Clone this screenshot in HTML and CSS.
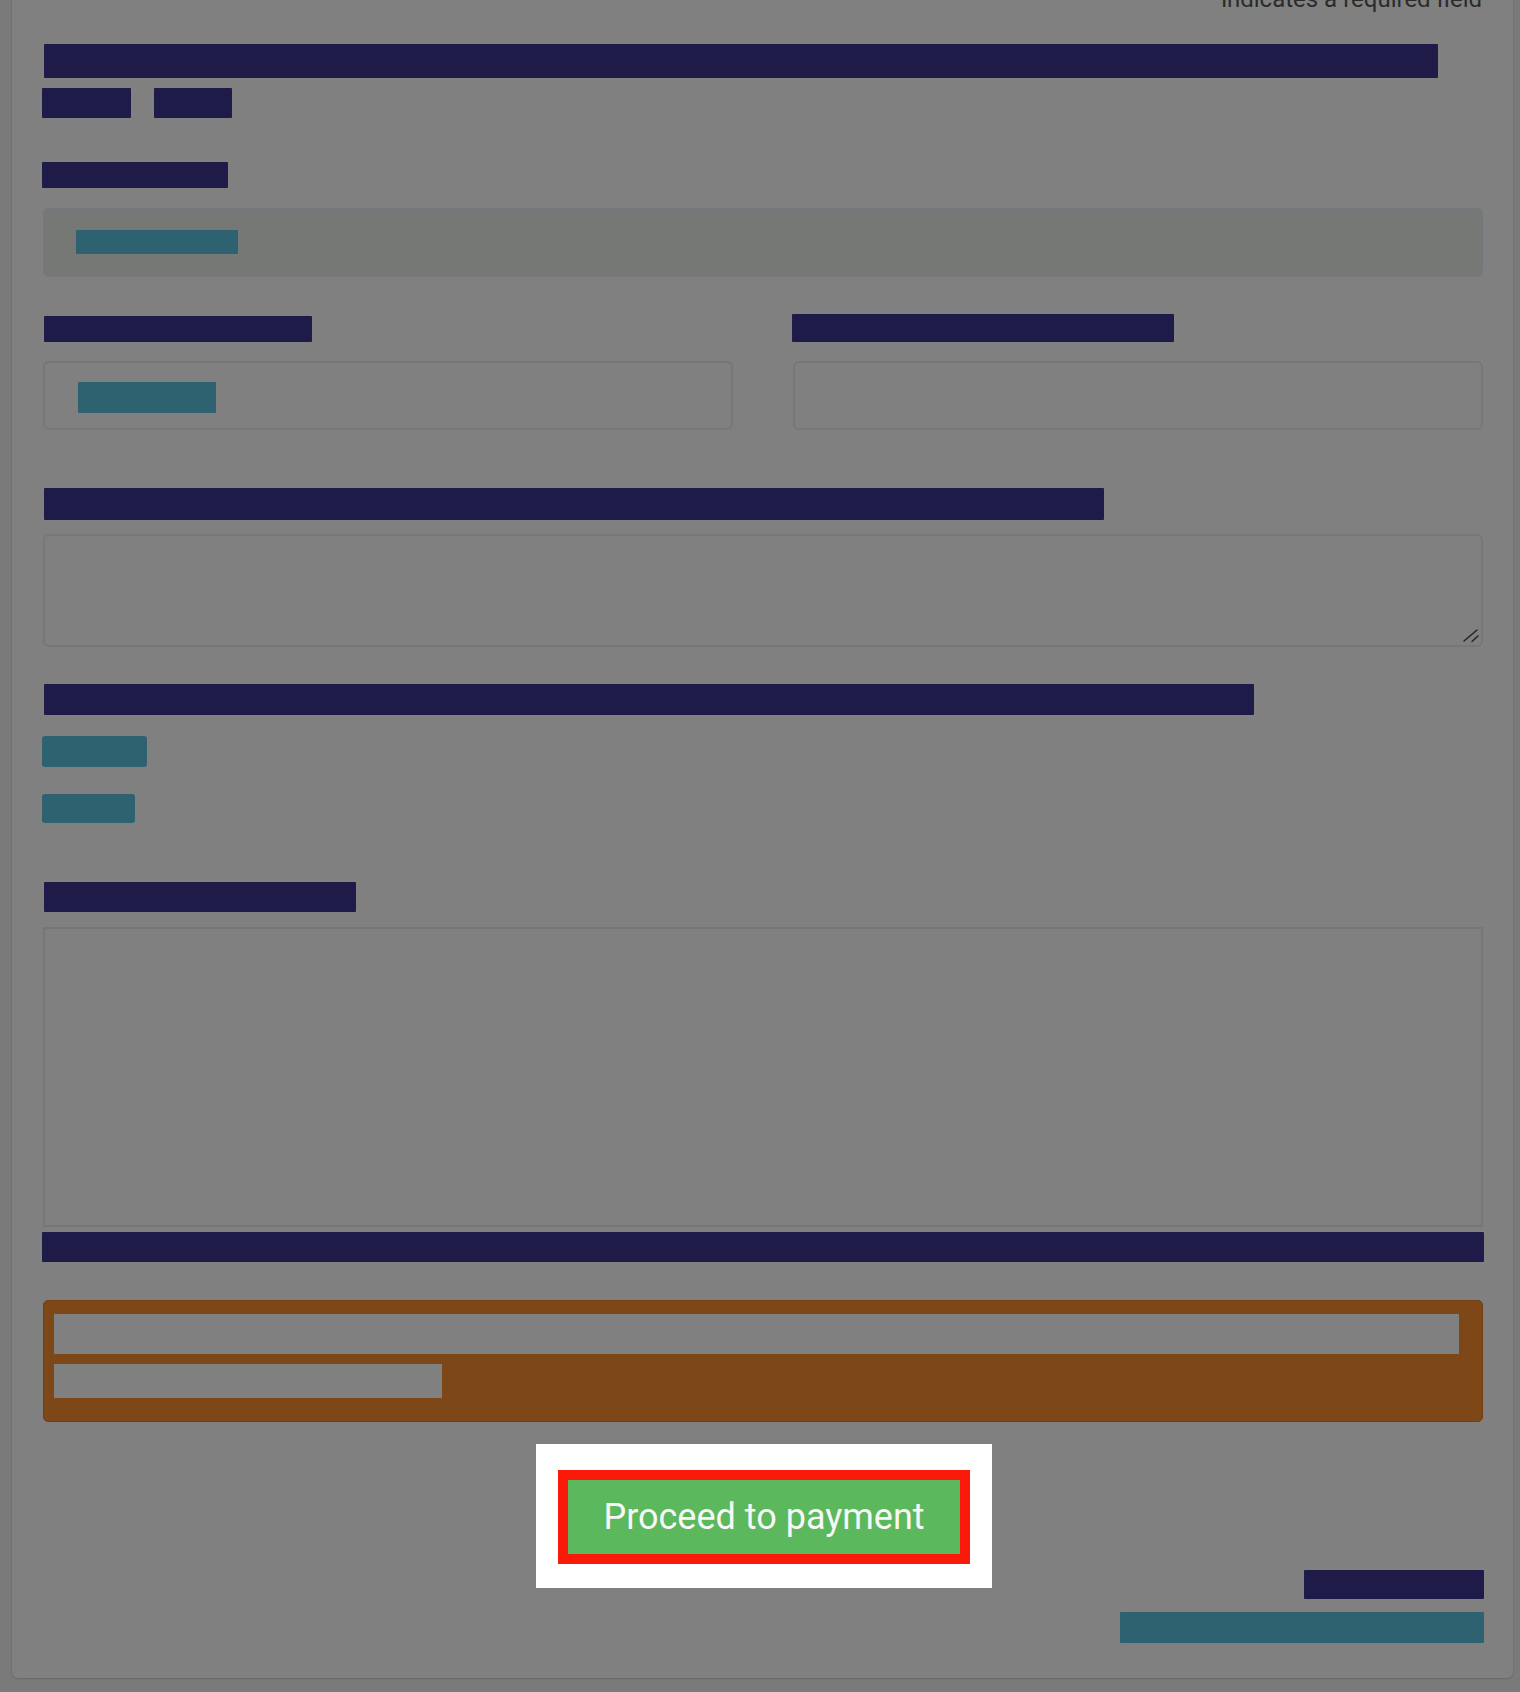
FILE: index.html
```html
<!DOCTYPE html>
<html lang="en">
<head>
<meta charset="utf-8">
<title>Order form</title>
<link rel="stylesheet" href="styles.css">
</head>
<body>
<div class="panel">
  <p class="required-note">indicates a required field</p>

  <div class="bar title"></div>
  <div class="tag-row">
    <span class="bar tag tag-a"></span>
    <span class="bar tag tag-b"></span>
  </div>

  <div class="bar label label-1"></div>
  <div class="field readonly">
    <span class="value value-1"></span>
  </div>

  <div class="two-col">
    <div class="col">
      <div class="bar label label-2"></div>
      <div class="field">
        <span class="value value-2"></span>
      </div>
    </div>
    <div class="col">
      <div class="bar label label-3"></div>
      <div class="field"></div>
    </div>
  </div>

  <div class="bar label label-4"></div>
  <div class="textarea-wrap">
    <textarea class="textarea"></textarea>
    <svg class="grip" width="20" height="18" viewBox="0 0 20 18" aria-hidden="true">
      <line x1="3" y1="14" x2="16" y2="3" stroke="#262626" stroke-width="1.6" stroke-linecap="round"/>
      <line x1="11" y1="14.5" x2="17" y2="9" stroke="#262626" stroke-width="1.6" stroke-linecap="round"/>
    </svg>
  </div>

  <div class="bar label label-5"></div>
  <div class="link link-1"></div>
  <div class="link link-2"></div>

  <div class="bar label label-6"></div>
  <div class="frame"></div>
  <div class="bar full-bar"></div>

  <div class="warning">
    <div class="warn-line warn-line-1"></div>
    <div class="warn-line warn-line-2"></div>
  </div>

  <div class="action">
    <div class="highlight">
      <button class="pay-button" type="button">Proceed to payment</button>
    </div>
  </div>

  <div class="footer">
    <div class="bar foot-a"></div>
    <div class="link foot-b"></div>
  </div>
</div>
</body>
</html>
```

FILE: styles.css
```css
html, body {
  margin: 0;
  padding: 0;
  height: 1692px;
  overflow: hidden;
}

body {
  background: #7a7a7a;
  font-family: Roboto, "Liberation Sans", Arial, sans-serif;
}

.panel {
  margin: -13px 7px 0 12px;
  padding: 0 30px 35px 31px;
  background: #808080;
  border-radius: 6px;
  box-shadow: 0 1px 2px rgba(0, 0, 0, 0.12), 0 0 0 1px rgba(0, 0, 0, 0.03);
  display: flex;
  flex-direction: column;
}

.required-note {
  margin: 0;
  height: 24px;
  line-height: 24px;
  font-size: 24px;
  color: #2b2b2b;
  text-align: right;
  padding-right: 1px;
  white-space: nowrap;
}

.bar {
  background: #1e1b48;
  border-radius: 1px;
}

.title {
  margin: 33px 0 0 1px;
  width: 1394px;
  height: 34px;
}

.tag-row {
  display: flex;
  gap: 23px;
  margin: 10px 0 0 -1px;
}

.tag {
  display: block;
  height: 30px;
}

.tag-a { width: 89px; }
.tag-b { width: 78px; }

.label {
  margin-left: -1px;
}

.label-1 { margin-top: 44px; width: 186px; height: 26px; }
.label-2 { margin-top: 2px; width: 268px; height: 26px; margin-left: 1px; }
.label-3 { width: 382px; height: 28px; margin-left: -1px; }
.label-4 { margin-top: 58px; width: 1060px; height: 32px; margin-left: 1px; }
.label-5 { margin-top: 37px; width: 1210px; height: 31px; margin-left: 1px; }
.label-6 { margin-top: 59px; width: 312px; height: 30px; margin-left: 1px; }

.field {
  box-sizing: border-box;
  height: 69px;
  border: 2px solid #74777b;
  border-radius: 6px;
  display: flex;
  align-items: flex-start;
}

.readonly {
  margin-top: 20px;
  background: #767876;
  padding: 20px 0 0 31px;
}

.value {
  display: block;
  background: #2f6270;
  border-radius: 1px;
}

.value-1 { width: 162px; height: 24px; }
.value-2 { width: 138px; height: 31px; margin: 19px 0 0 33px; }

.two-col {
  margin-top: 37px;
  display: grid;
  grid-template-columns: 690px 690px;
  column-gap: 60px;
}

.col {
  display: flex;
  flex-direction: column;
}

.col .field {
  margin-top: 19px;
}

.textarea-wrap {
  position: relative;
  margin-top: 14px;
}

.textarea {
  display: block;
  box-sizing: border-box;
  margin: 0;
  width: 100%;
  height: 113px;
  border: 2px solid #74777b;
  border-radius: 6px;
  background: #808080;
  resize: none;
  outline: none;
  font: inherit;
}

.grip {
  position: absolute;
  right: 2px;
  bottom: 2px;
  pointer-events: none;
}

.link {
  background: #2f6270;
  border-radius: 3px;
}

.link-1 { margin: 21px 0 0 -1px; width: 105px; height: 31px; }
.link-2 { margin: 27px 0 0 -1px; width: 93px; height: 29px; }

.frame {
  box-sizing: border-box;
  margin-top: 15px;
  height: 300px;
  border: 2px solid #767676;
}

.full-bar {
  margin: 5px -1px 0 -1px;
  height: 30px;
}

.warning {
  box-sizing: border-box;
  margin-top: 38px;
  height: 122px;
  background: #7e4717;
  border: 1px solid #743f13;
  border-radius: 5px;
  padding: 13px 23px 23px 10px;
  display: flex;
  flex-direction: column;
  gap: 10px;
}

.warn-line {
  background: #808080;
}

.warn-line-1 { height: 40px; }
.warn-line-2 { height: 34px; width: 388px; }

.action {
  margin-top: 22px;
  margin-bottom: -24px;
  padding-left: 2px;
  display: flex;
  justify-content: center;
  position: relative;
  z-index: 1;
}

.highlight {
  background: #ffffff;
  padding: 26px 22px 24px 22px;
}

.pay-button {
  display: block;
  box-sizing: border-box;
  width: 412px;
  height: 94px;
  margin: 0;
  padding: 0;
  background: #5cb85c;
  border: 10px solid #fa1a0a;
  border-radius: 0;
  color: #f7f7f7;
  font-family: Roboto, "Liberation Sans", Arial, sans-serif;
  font-size: 36px;
  font-weight: 400;
  line-height: 74px;
  cursor: pointer;
}

.footer {
  display: flex;
  flex-direction: column;
  align-items: flex-end;
  margin-right: -1px;
}

.foot-a {
  margin-top: 6px;
  width: 180px;
  height: 29px;
}

.foot-b {
  margin-top: 13px;
  width: 364px;
  height: 31px;
  border-radius: 1px;
}
```
